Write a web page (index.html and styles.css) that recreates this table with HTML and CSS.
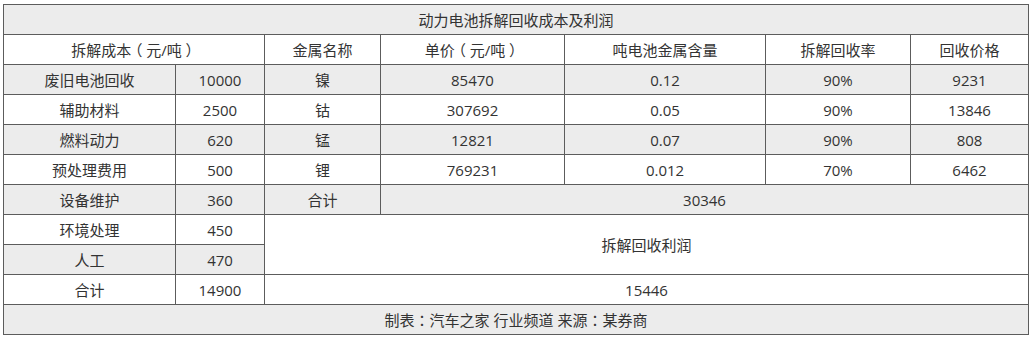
FILE: index.html
```html
<!DOCTYPE html>
<html lang="zh-CN">

<head>
    <meta charset="UTF-8">
    <title>动力电池拆解回收成本及利润</title>
    <link rel="stylesheet" href="styles.css">
</head>

<body>
    <table class="report">
        <colgroup>
            <col class="c1">
            <col class="c2">
            <col class="c3">
            <col class="c4">
            <col class="c5">
            <col class="c6">
            <col class="c7">
        </colgroup>
        <tr class="gray">
            <td colspan="7">动力电池拆解回收成本及利润</td>
        </tr>
        <tr>
            <td colspan="2">拆解成本<span class="paren">（</span>元/吨<span class="paren">）</span></td>
            <td>金属名称</td>
            <td>单价<span class="paren">（</span>元/吨<span class="paren">）</span></td>
            <td>吨电池金属含量</td>
            <td>拆解回收率</td>
            <td>回收价格</td>
        </tr>
        <tr class="gray">
            <td>废旧电池回收</td>
            <td>10000</td>
            <td>镍</td>
            <td>85470</td>
            <td>0.12</td>
            <td>90%</td>
            <td>9231</td>
        </tr>
        <tr>
            <td>辅助材料</td>
            <td>2500</td>
            <td>钴</td>
            <td>307692</td>
            <td>0.05</td>
            <td>90%</td>
            <td>13846</td>
        </tr>
        <tr class="gray">
            <td>燃料动力</td>
            <td>620</td>
            <td>锰</td>
            <td>12821</td>
            <td>0.07</td>
            <td>90%</td>
            <td>808</td>
        </tr>
        <tr>
            <td>预处理费用</td>
            <td>500</td>
            <td>锂</td>
            <td>769231</td>
            <td>0.012</td>
            <td>70%</td>
            <td>6462</td>
        </tr>
        <tr class="gray">
            <td>设备维护</td>
            <td>360</td>
            <td>合计</td>
            <td colspan="4">30346</td>
        </tr>
        <tr>
            <td>环境处理</td>
            <td>450</td>
            <td colspan="5" rowspan="2" class="white">拆解回收利润</td>
        </tr>
        <tr class="gray">
            <td>人工</td>
            <td>470</td>
        </tr>
        <tr>
            <td>合计</td>
            <td>14900</td>
            <td colspan="5">15446</td>
        </tr>
        <tr class="gray">
            <td colspan="7">制表<span class="punct" lang="zh-TW">：</span>汽车之家 行业频道 来源<span class="punct" lang="zh-TW">：</span>某券商</td>
        </tr>
    </table>
</body>

</html>
```

FILE: styles.css
```css
body {
    margin: 0;
    padding: 4px 3px;
    background: #fff;
    font-family: "Open Sans", "Noto Sans CJK SC", sans-serif;
    font-size: 15px;
    color: #333;
}

.report {
    border-collapse: collapse;
    table-layout: fixed;
    width: 1025px;
}

.report td {
    border: 1px solid #5c5c5c;
    height: 29px;
    padding: 0;
    text-align: center;
    vertical-align: middle;
    line-height: 20px;
}

.report tr.gray td {
    background: #ececec;
}

.report td.white {
    background: #fff;
}

/* centred full-width punctuation, like the original font */
.punct {
    font-family: "Noto Sans CJK TC", sans-serif;
}

.paren {
    font-feature-settings: "halt";
    margin: 0 0.25em;
}

.c1 { width: 172px; }
.c2 { width: 89px; }
.c3 { width: 116px; }
.c4 { width: 184px; }
.c5 { width: 201px; }
.c6 { width: 145px; }
.c7 { width: 118px; }
```
